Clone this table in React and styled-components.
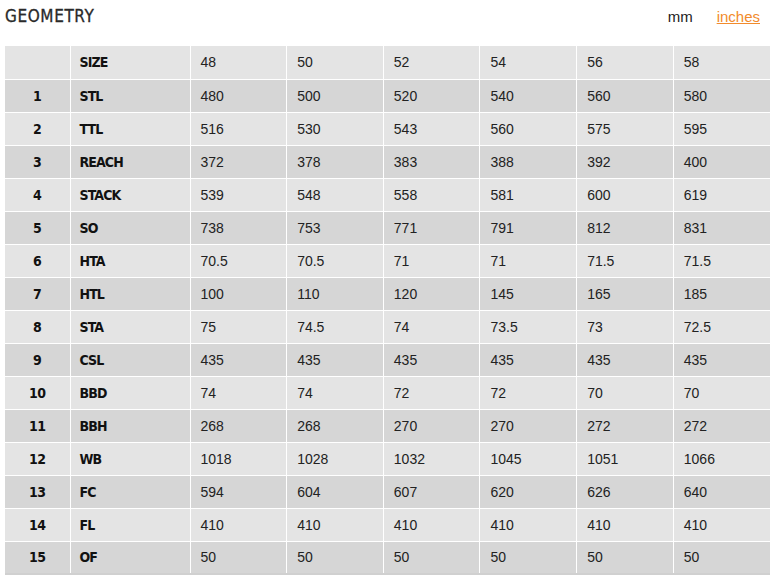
import React from 'react'
import styled, { createGlobalStyle } from 'styled-components';

const Global = createGlobalStyle`
body {
  margin: 0;
  background: #fff;
  font-family: "Liberation Sans", Arial, sans-serif;
}
`;

const Wrap = styled.div`
padding: 5px 2px 0 5px;
width: 772px;
box-sizing: border-box;
`;

const Top = styled.div`
display: flex;
align-items: center;
justify-content: space-between;
height: 22px;
padding-right: 10px;
`;

const Title = styled.h2`
margin: 0;
font-family: "DejaVu Sans Condensed", "DejaVu Sans", sans-serif;
font-weight: normal;
font-size: 17px;
letter-spacing: 0.6px;
color: #2a2a2a;
-webkit-text-stroke: 0.3px #2a2a2a;
`;

const Units = styled.div`
display: flex;
gap: 24px;
font-size: 15px;
`;

const Unit = styled.a`
color: ${p => (p.active ? '#222' : '#f28b2c')};
text-decoration: ${p => (p.active ? 'none' : 'underline')};
cursor: pointer;
`;

const Table = styled.table`
margin-top: 19px;
width: 765px;
border-collapse: collapse;
table-layout: fixed;
border-bottom: 2px solid #d0d0d0;
`;

const Row = styled.tr`
background: ${p => (p.dark ? '#d6d6d6' : '#e4e4e4')};
`;

const Cell = styled.td`
height: 33px;
padding: 0 0 0 10px;
border: 1px solid #fff;
border-top: ${p => (p.first ? 'none' : '1px solid #fff')};
font-size: 14px;
color: #222;
box-sizing: border-box;
&:first-child { border-left: none; }
&:last-child { border-right: none; }
`;

const Num = styled(Cell)`
padding: 0;
text-align: center;
font-family: "DejaVu Sans Condensed", "DejaVu Sans", sans-serif;
font-weight: bold;
font-size: 14px;
letter-spacing: -0.4px;
color: #111;
`;

const Label = styled(Cell)`
padding-left: 9px;
font-family: "DejaVu Sans Condensed", "DejaVu Sans", sans-serif;
font-weight: bold;
font-size: 14px;
letter-spacing: -0.9px;
color: #111;
`;

const sizes = ['48', '50', '52', '54', '56', '58'];

const rows = [
  ['STL', '480', '500', '520', '540', '560', '580'],
  ['TTL', '516', '530', '543', '560', '575', '595'],
  ['REACH', '372', '378', '383', '388', '392', '400'],
  ['STACK', '539', '548', '558', '581', '600', '619'],
  ['SO', '738', '753', '771', '791', '812', '831'],
  ['HTA', '70.5', '70.5', '71', '71', '71.5', '71.5'],
  ['HTL', '100', '110', '120', '145', '165', '185'],
  ['STA', '75', '74.5', '74', '73.5', '73', '72.5'],
  ['CSL', '435', '435', '435', '435', '435', '435'],
  ['BBD', '74', '74', '72', '72', '70', '70'],
  ['BBH', '268', '268', '270', '270', '272', '272'],
  ['WB', '1018', '1028', '1032', '1045', '1051', '1066'],
  ['FC', '594', '604', '607', '620', '626', '640'],
  ['FL', '410', '410', '410', '410', '410', '410'],
  ['OF', '50', '50', '50', '50', '50', '50'],
];

function App() {
  return (
    <Wrap>
      <Global />
      <Top>
        <Title>GEOMETRY</Title>
        <Units>
          <Unit active>mm</Unit>
          <Unit>inches</Unit>
        </Units>
      </Top>
      <Table>
        <colgroup>
          <col style={{ width: 65 }} />
          <col style={{ width: 120 }} />
          {sizes.map(s => <col key={s} />)}
        </colgroup>
        <tbody>
          <Row>
            <Num first></Num>
            <Label first>SIZE</Label>
            {sizes.map(s => <Cell first key={s}>{s}</Cell>)}
          </Row>
          {rows.map((r, i) => (
            <Row key={r[0]} dark={i % 2 === 0}>
              <Num>{i + 1}</Num>
              <Label>{r[0]}</Label>
              {r.slice(1).map((v, j) => <Cell key={j}>{v}</Cell>)}
            </Row>
          ))}
        </tbody>
      </Table>
    </Wrap>
  )
}

export default App
